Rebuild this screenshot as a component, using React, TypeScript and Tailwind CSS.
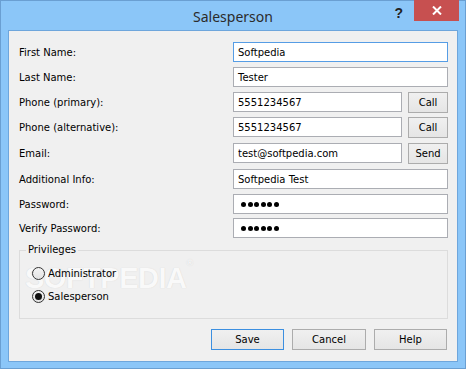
import React from "react";

const font = { fontFamily: '"DejaVu Sans", "Liberation Sans", sans-serif' };

function Field({ value, focused, short }: { value: string; focused?: boolean; short?: boolean }) {
  return (
    <div
      className={`h-[20px] ${short ? "w-[169px]" : "w-[215px]"} bg-white border ${
        focused ? "border-[#569de5]" : "border-[#abadb3]"
      } flex items-center pl-[4px] text-[10px] text-black`}
    >
      {value}
    </div>
  );
}

function PwdField() {
  return (
    <div className="h-[20px] w-[215px] bg-white border border-[#abadb3] flex items-center pl-[7px] gap-[1.6px]">
      {[0, 1, 2, 3, 4, 5].map((i) => (
        <div key={i} className="w-[5px] h-[5px] rounded-full bg-black" />
      ))}
    </div>
  );
}

function Btn({ label, w, primary }: { label: string; w: string; primary?: boolean }) {
  return (
    <div
      className={`${w} h-[21px] border ${
        primary ? "border-[#3c8fe0]" : "border-[#acacac]"
      } bg-gradient-to-b from-[#f0f0f0] to-[#e5e5e5] flex items-center justify-center text-[10px] text-black`}
    >
      {label}
    </div>
  );
}

function Radio({ label, checked }: { label: string; checked?: boolean }) {
  return (
    <div className="flex items-center h-[14px]">
      <div className="w-[13px] h-[13px] rounded-full border border-[#333] bg-gradient-to-b from-[#f4f4f4] to-[#e2e2e2] flex items-center justify-center">
        {checked && <div className="w-[7px] h-[7px] rounded-full bg-[#111]" />}
      </div>
      <span className="ml-[3px] text-[10px] text-black">{label}</span>
    </div>
  );
}

function Row({ label, children, cls = "" }: { label: string; children: React.ReactNode; cls?: string }) {
  return (
    <div className={`flex items-center h-[20px] ${cls}`}>
      <div className="w-[214px] text-[10px] text-black">{label}</div>
      {children}
    </div>
  );
}

export default function App() {
  return (
    <div style={font} className="w-[466px] h-[369px] border border-[#6a9fd2] bg-[#8bc6f8] flex flex-col">
      <div className="h-[29px] grid grid-cols-[1fr_auto_1fr] items-start">
        <div />
        <div
          className="pt-[5px] text-[14px] text-[#2b2b2b]"
          style={{ fontFamily: '"Noto Sans", "Open Sans", sans-serif' }}
        >
          Salesperson
        </div>
        <div className="flex justify-end items-start pr-[6px]">
          <div className="mt-[2px] mr-[11px] text-[14px] font-bold text-[#222]" style={{ fontFamily: '"Liberation Sans", sans-serif' }}>
            ?
          </div>
          <div className="-mt-[1px] w-[45px] h-[21px] bg-[#c75050] flex items-center justify-center">
            <svg width="10" height="9" viewBox="0 0 10 9">
              <path d="M1 0.5 L9 8.5 M9 0.5 L1 8.5" stroke="#fff" strokeWidth="2" />
            </svg>
          </div>
        </div>
      </div>
      <div className="ml-[7px] mr-[7px] h-[332px] border border-[#6ea6dc] bg-[#f0f0f0] relative flex flex-col pl-[10px] pr-[9px] pt-[11px]">
        <div
          className="absolute z-0 left-[16px] top-[226px] text-[29px] font-bold tracking-[-0.5px] text-[#f9f9f9] [text-shadow:0_0_1px_#cfcfcf] pointer-events-none"
          style={{ fontFamily: '"Liberation Sans", sans-serif' }}
        >
          SOFTPEDIA<span className="text-[9px] align-top">®</span>
        </div>
        <div className="relative z-[1] flex flex-col gap-[5px]">
          <Row label="First Name:">
            <Field value="Softpedia" focused />
          </Row>
          <Row label="Last Name:">
            <Field value="Tester" />
          </Row>
          <Row label="Phone (primary):">
            <Field value="5551234567" short />
            <div className="ml-[6px]">
              <Btn label="Call" w="w-[40px]" />
            </div>
          </Row>
          <Row label="Phone (alternative):">
            <Field value="5551234567" short />
            <div className="ml-[6px]">
              <Btn label="Call" w="w-[40px]" />
            </div>
          </Row>
          <Row label="Email:" cls="mt-[1px]">
            <Field value="test@softpedia.com" short />
            <div className="ml-[6px]">
              <Btn label="Send" w="w-[40px]" />
            </div>
          </Row>
          <Row label="Additional Info:" cls="mt-[1px]">
            <Field value="Softpedia Test" />
          </Row>
          <Row label="Password:">
            <PwdField />
          </Row>
          <Row label="Verify Password:" cls="-mt-[1px]">
            <PwdField />
          </Row>
        </div>
        <fieldset className="relative z-[1] mt-[6px] w-[429px] h-[75px] border border-[#dcdcdc] pl-[12px] pt-[10px]">
          <legend className="-ml-[6px] px-[2px] text-[10px] text-black leading-[12px]">Privileges</legend>
          <div className="flex flex-col gap-[9px]">
            <Radio label="Administrator" />
            <Radio label="Salesperson" checked />
          </div>
        </fieldset>
        <div className="relative z-[1] mt-[10px] flex justify-end gap-[8px] pr-[1px]">
          <Btn label="Save" w="w-[73px]" primary />
          <Btn label="Cancel" w="w-[74px]" />
          <Btn label="Help" w="w-[73px]" />
        </div>
      </div>
    </div>
  );
}
